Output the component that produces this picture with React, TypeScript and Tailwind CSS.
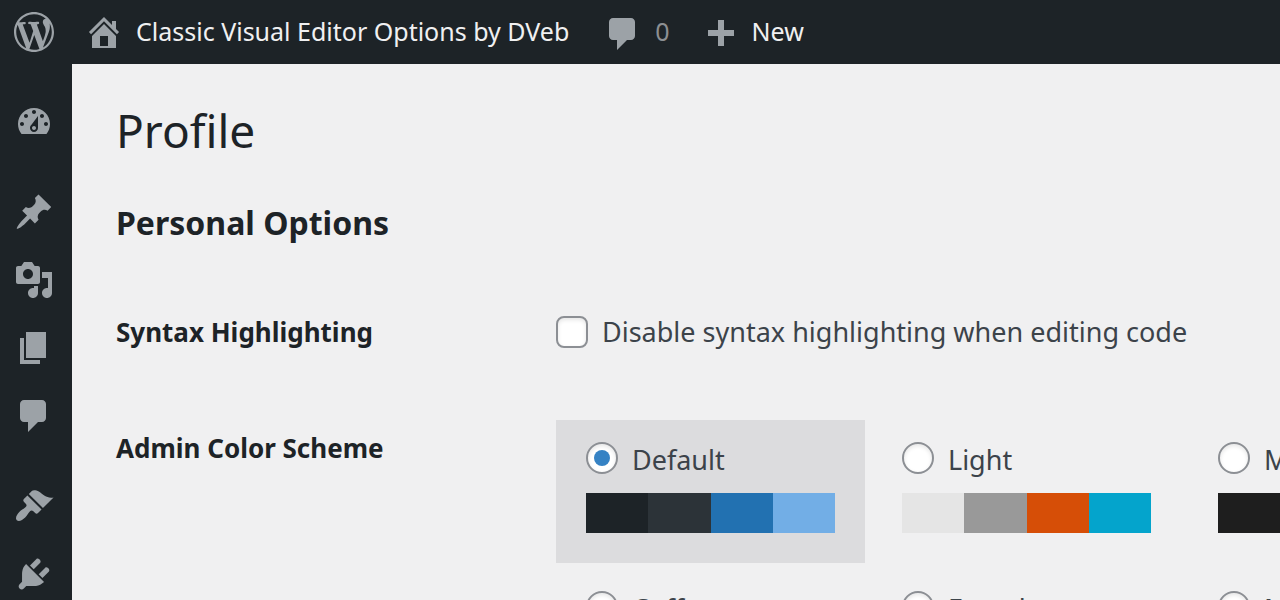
import { useState } from 'react'

const icons = {
  wordpress:
    'M20 10c0-5.51-4.49-10-10-10C4.48 0 0 4.49 0 10c0 5.52 4.48 10 10 10 5.51 0 10-4.48 10-10zM7.78 15.37L4.37 6.22c.55-.02 1.17-.08 1.17-.08.5-.06.44-1.13-.06-1.11 0 0-1.45.11-2.37.11-.18 0-.37 0-.58-.01C4.12 2.69 6.87 1.11 10 1.11c2.33 0 4.45.87 6.05 2.34-.68-.11-1.65.39-1.65 1.58 0 .74.45 1.36.9 2.1.35.61.55 1.36.55 2.46 0 1.49-1.4 5-1.4 5l-3.03-8.37c.54-.02.82-.17.82-.17.5-.05.44-1.25-.06-1.22 0 0-1.44.12-2.38.12-.87 0-2.33-.12-2.33-.12-.5-.03-.56 1.2-.06 1.22l.92.08 1.26 3.41zM17.41 10c.24-.64.74-1.87.43-4.25.7 1.29 1.05 2.71 1.05 4.25 0 3.29-1.73 6.24-4.4 7.78.97-2.59 1.94-5.2 2.92-7.78zM6.1 18.09C3.12 16.65 1.11 13.53 1.11 10c0-1.3.23-2.48.72-3.59C3.25 10.3 4.67 14.2 6.1 18.09zm4.03-6.63l2.58 6.98c-.86.29-1.76.45-2.71.45-.79 0-1.57-.11-2.29-.33.81-2.38 1.62-4.74 2.42-7.1z',
  home: 'M16 8.5l1.53 1.53-1.06 1.06L10 4.6l-6.47 6.49-1.06-1.06L10 2.5l4 4v-2h2v4zm-6-2.46l6 5.99V18H4v-5.97zM12 17v-5H8v5h4z',
  comments:
    'M5 2h9c1.1 0 2 .9 2 2v7c0 1.1-.9 2-2 2h-2l-5 5v-5H5c-1.1 0-2-.9-2-2V4c0-1.1.9-2 2-2z',
  plus: 'M17 7v3h-5v5H9v-5H4V7h5V2h3v5h5z',
  dashboard:
    'M3.76 16h12.48c1.1-1.37 1.76-3.11 1.76-5 0-4.42-3.58-8-8-8s-8 3.58-8 8c0 1.89.66 3.63 1.76 5zM10 4c.55 0 1 .45 1 1s-.45 1-1 1-1-.45-1-1 .45-1 1-1zM6 6c.55 0 1 .45 1 1s-.45 1-1 1-1-.45-1-1 .45-1 1-1zm8 0c.55 0 1 .45 1 1s-.45 1-1 1-1-.45-1-1 .45-1 1-1zm-5.37 5.55L12 7v6c0 1.1-.9 2-2 2s-2-.9-2-2c0-.57.24-1.08.63-1.45zM4 10c.55 0 1 .45 1 1s-.45 1-1 1-1-.45-1-1 .45-1 1-1zm12 0c.55 0 1 .45 1 1s-.45 1-1 1-1-.45-1-1 .45-1 1-1zm-5 3c0-.55-.45-1-1-1s-1 .45-1 1 .45 1 1 1 1-.45 1-1z',
  posts:
    'M10.44 3.02l1.82-1.82 6.36 6.35-1.83 1.82c-1.05-.68-2.48-.57-3.41.36l-.75.75c-.92.93-1.04 2.35-.35 3.41l-1.83 1.82-2.41-2.41-2.8 2.79c-.42.42-3.38 2.71-3.8 2.29s1.86-3.39 2.28-3.81l2.79-2.79L4.1 9.36l1.83-1.82c1.05.69 2.48.57 3.4-.36l.75-.75c.93-.92 1.05-2.35.36-3.41z',
  media:
    'M13 11V4c0-.55-.45-1-1-1h-1.67L9 1H5L3.67 3H2c-.55 0-1 .45-1 1v7c0 .55.45 1 1 1h10c.55 0 1-.45 1-1zM7 4.5c1.38 0 2.5 1.12 2.5 2.5S8.38 9.5 7 9.5 4.5 8.38 4.5 7 5.62 4.5 7 4.5zM14 6h5v10.5c0 1.38-1.12 2.5-2.5 2.5S14 17.88 14 16.5s1.12-2.5 2.5-2.5c.17 0 .34.02.5.05V9h-3V6zm-4 8.05V13h2v3.5c0 1.38-1.12 2.5-2.5 2.5S7 17.88 7 16.5 8.12 14 9.5 14c.17 0 .34.02.5.05z',
  pages: 'M6 15V2h10v13H6zm-1 1h8v2H3V5h2v11z',
  appearance:
    'M14.48 11.06L7.41 3.99l1.5-1.5c.5-.56 2.3-.47 3.51.32 1.21.8 1.43 1.28 2.91 2.1 1.18.64 2.45 1.26 4.45.85zm-.71.71L6.7 4.7 4.93 6.47c-.39.39-.39 1.02 0 1.41l1.06 1.06c.39.39.39 1.03 0 1.42-.6.6-1.43 1.11-2.21 1.69-.35.26-.7.53-1.01.84C1.43 14.23.4 16.08 1.4 17.07c.99 1 2.84-.03 4.18-1.36.31-.31.58-.66.85-1.02.57-.78 1.08-1.61 1.69-2.21.39-.39 1.02-.39 1.41 0l1.06 1.06c.39.39 1.02.39 1.41 0z',
  plugins:
    'M13.11 4.36L9.87 7.6 8 5.73l3.24-3.24c.35-.34 1.05-.2 1.56.32.52.51.66 1.21.31 1.55zm-8 1.77l.91-1.12 9.01 9.01-1.19.84c-.71.71-2.63 1.16-3.82 1.16H6.14L4.9 17.26c-.59.59-1.54.59-2.12 0-.59-.58-.59-1.53 0-2.12l1.24-1.24v-3.88c0-1.13.4-3.19 1.09-3.89zm7.26 3.97l3.24-3.24c.34-.35 1.04-.21 1.55.31.52.51.66 1.21.31 1.55l-3.24 3.25z',
}

type IconName = keyof typeof icons

function Icon({ name }: { name: IconName }) {
  return (
    <svg viewBox="0 0 20 20" className="w-10 h-10 shrink-0 fill-[#9ca2a7]" aria-hidden="true">
      <path fillRule="evenodd" d={icons[name]} />
    </svg>
  )
}

const menuGroups: { name: IconName; label: string }[][] = [
  [{ name: 'dashboard', label: 'Dashboard' }],
  [
    { name: 'posts', label: 'Posts' },
    { name: 'media', label: 'Media' },
    { name: 'pages', label: 'Pages' },
    { name: 'comments', label: 'Comments' },
  ],
  [
    { name: 'appearance', label: 'Appearance' },
    { name: 'plugins', label: 'Plugins' },
  ],
]

const schemes = [
  { name: 'Default', colors: ['bg-[#1d2327]', 'bg-[#2c3338]', 'bg-[#2271b1]', 'bg-[#72aee6]'] },
  { name: 'Light', colors: ['bg-[#e5e5e5]', 'bg-[#999999]', 'bg-[#d64e07]', 'bg-[#04a4cc]'] },
  { name: 'Modern', colors: ['bg-[#1e1e1e]', 'bg-[#3858e9]', 'bg-[#33f078]', 'bg-[#7b90ff]'] },
  { name: 'Coffee', colors: ['bg-[#46403c]', 'bg-[#59524c]', 'bg-[#c7a589]', 'bg-[#9ea476]'] },
  { name: 'Ectoplasm', colors: ['bg-[#413256]', 'bg-[#523f6d]', 'bg-[#a3b745]', 'bg-[#d46f15]'] },
  { name: 'Midnight', colors: ['bg-[#25282b]', 'bg-[#363b3f]', 'bg-[#69a8bb]', 'bg-[#e14d43]'] },
]

function AdminBar() {
  return (
    <header className="flex h-16 shrink-0 items-center bg-[#1d2327] pl-3.5 text-[25px] leading-8 whitespace-nowrap text-[#f0f0f1]">
      <a href="#about" aria-label="About WordPress" className="mr-[30px]">
        <Icon name="wordpress" />
      </a>
      <a href="#site" className="flex items-center gap-3 mr-[34px]">
        <Icon name="home" />
        <span className="pb-0.5">Classic Visual Editor Options by DVeb</span>
      </a>
      <a href="#comments" className="flex items-center gap-3 mr-[30px] text-[#8c8f92]">
        <span className="pt-1">
          <Icon name="comments" />
        </span>
        <span className="pb-0.5">0</span>
      </a>
      <a href="#new" className="flex items-center gap-3">
        <span className="pt-2">
          <Icon name="plus" />
        </span>
        <span className="pb-0.5">New</span>
      </a>
    </header>
  )
}

function AdminMenu() {
  return (
    <nav className="flex w-[72px] shrink-0 flex-col gap-[22px] bg-[#1d2327] pt-6">
      {menuGroups.map((group) => (
        <ul key={group[0].name}>
          {group.map((item) => (
            <li key={item.name}>
              <a href={`#${item.name}`} aria-label={item.label} className="flex h-[68px] items-center pl-3.5">
                <Icon name={item.name} />
              </a>
            </li>
          ))}
        </ul>
      ))}
    </nav>
  )
}

export default function App() {
  const [scheme, setScheme] = useState('Default')
  const [noSyntax, setNoSyntax] = useState(false)

  return (
    <div className="flex h-screen flex-col overflow-hidden bg-[#f0f0f1] font-['Noto_Sans',sans-serif] text-[#1d2327]">
      <AdminBar />
      <div className="flex min-h-0 flex-1">
        <AdminMenu />
        <main className="min-w-0 flex-1 overflow-hidden pl-11 pt-9">
          <h1 className="text-[46px] leading-[60px]">Profile</h1>
          <h2 className="mt-10 text-[32px] leading-[46px] font-bold">Personal Options</h2>

          <div className="mt-[68px] flex flex-col gap-[70px] text-[27px] leading-9 text-[#3c434a]">
            {/* Syntax highlighting */}
            <div className="flex">
              <div className="w-[440px] shrink-0 text-[26px] font-bold text-[#1d2327]">Syntax Highlighting</div>
              <label className="flex items-center gap-3.5 whitespace-nowrap">
                <input
                  type="checkbox"
                  checked={noSyntax}
                  onChange={(e) => setNoSyntax(e.target.checked)}
                  className="h-8 w-8 shrink-0 appearance-none rounded-lg border-2 border-[#8c8f94] bg-white shadow-[inset_0_2px_4px_rgba(0,0,0,0.1)] checked:bg-[#3582c4]"
                />
                Disable syntax highlighting when editing code
              </label>
            </div>

            {/* Color schemes */}
            <div className="flex">
              <div id="scheme-title" className="w-[440px] shrink-0 pt-2.5 text-[26px] font-bold text-[#1d2327]">
                Admin Color Scheme
              </div>
              <div
                role="radiogroup"
                aria-labelledby="scheme-title"
                className="grid grid-cols-[repeat(3,309px)] gap-x-[7px] gap-y-1.5"
              >
                {schemes.map((s) => (
                  <label
                    key={s.name}
                    className="block px-[30px] pt-[22px] pb-[30px] has-[:checked]:bg-[#dcdcde]"
                  >
                    <span className="flex items-start gap-3.5">
                      <input
                        type="radio"
                        name="admin_color"
                        value={s.name}
                        checked={scheme === s.name}
                        onChange={() => setScheme(s.name)}
                        className="grid h-8 w-8 shrink-0 appearance-none place-items-center rounded-full border-2 border-[#8c8f94] bg-white shadow-[inset_0_2px_4px_rgba(0,0,0,0.1)] before:h-4 before:w-4 before:rounded-full checked:before:bg-[#3582c4]"
                      />
                      {s.name}
                    </span>
                    <span className="mt-[15px] flex h-10">
                      {s.colors.map((color) => (
                        <span key={color} className={`flex-1 ${color}`} />
                      ))}
                    </span>
                  </label>
                ))}
              </div>
            </div>
          </div>
        </main>
      </div>
    </div>
  )
}
